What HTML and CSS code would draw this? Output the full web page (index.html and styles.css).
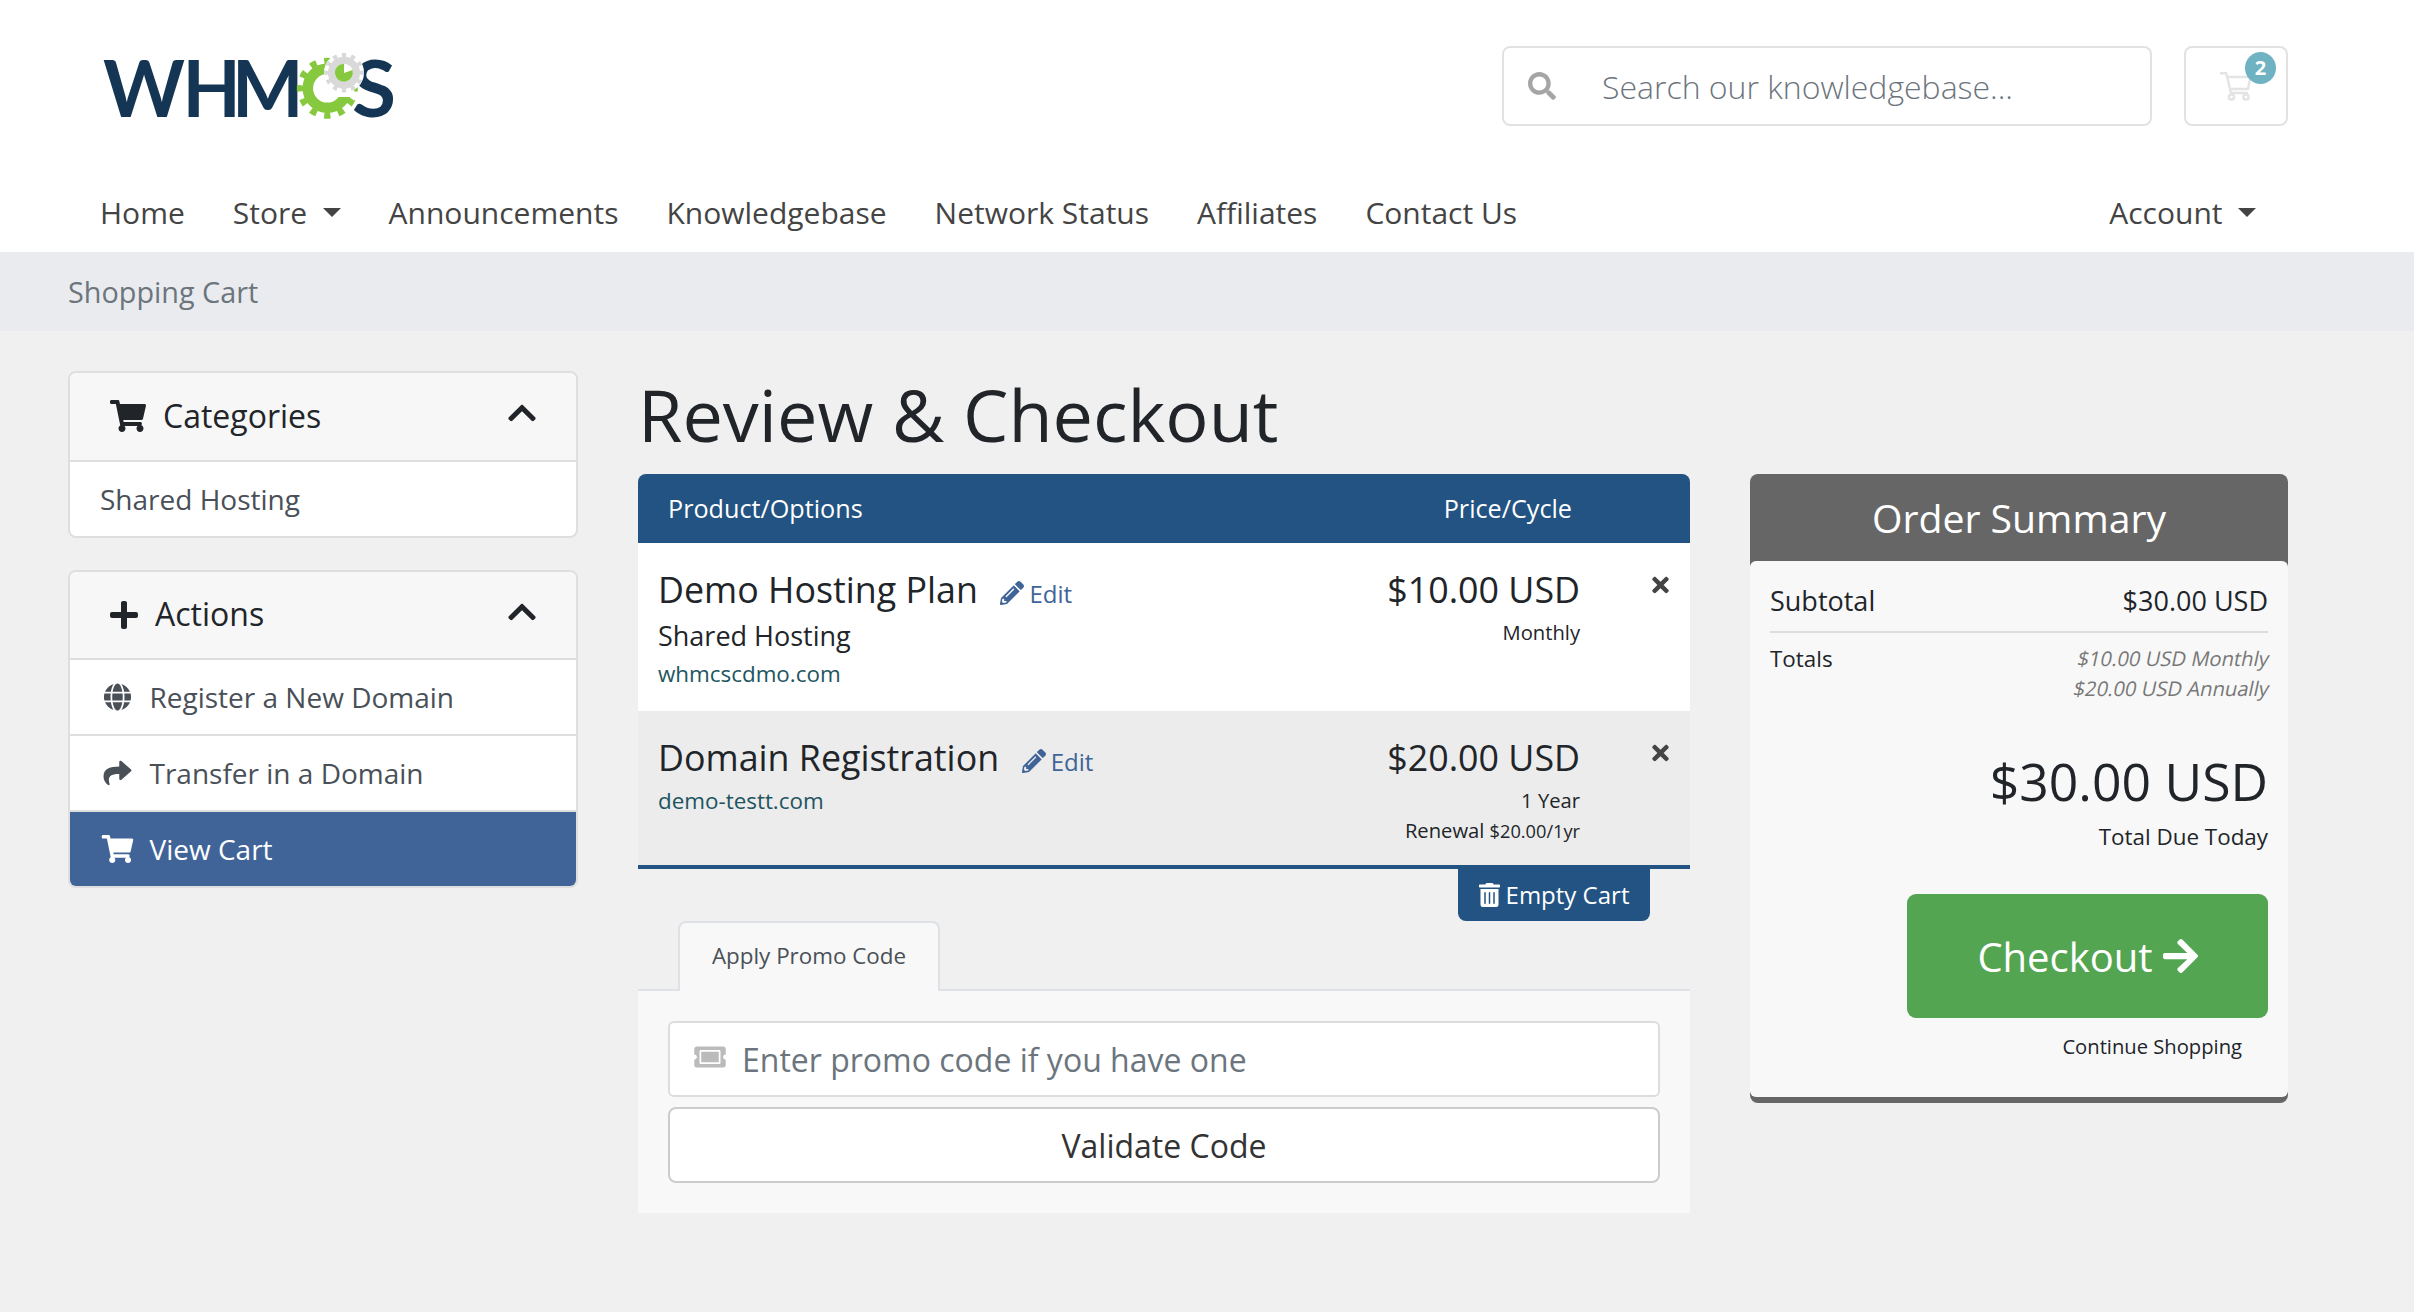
FILE: index.html
```html
<!DOCTYPE html>
<html lang="en">
<head>
    <meta charset="UTF-8">
    <meta name="viewport" content="width=device-width, initial-scale=1.0">
    <title>Shopping Cart - WHMCS</title>
    <link rel="stylesheet" href="styles.css">
</head>
<body>

    <!-- shared icons -->
    <svg class="sprite" width="0" height="0">
        <symbol id="cart" viewBox="0 0 576 512"><path d="M528.12 301.319l47.273-208C578.806 78.301 567.391 64 551.99 64H159.208l-9.166-44.81C147.758 8.021 137.93 0 126.529 0H24C10.745 0 0 10.745 0 24v16c0 13.255 10.745 24 24 24h69.883l70.248 343.435C147.325 417.1 136 435.222 136 456c0 30.928 25.072 56 56 56s56-25.072 56-56c0-15.674-6.447-29.835-16.824-40h209.647C430.447 426.165 424 440.326 424 456c0 30.928 25.072 56 56 56s56-25.072 56-56c0-22.172-12.888-41.332-31.579-50.405l5.517-24.276c3.413-15.018-8.002-29.319-23.403-29.319H218.117l-6.545-32h293.145c11.206 0 20.92-7.754 23.403-18.681z"/></symbol>
        <symbol id="chevron" viewBox="0 0 448 512"><path d="M240.971 130.524l194.343 194.343c9.373 9.373 9.373 24.569 0 33.941l-22.667 22.667c-9.357 9.357-24.522 9.375-33.901.04L224 227.495 69.255 381.516c-9.379 9.335-24.544 9.317-33.901-.04l-22.667-22.667c-9.373-9.373-9.373-24.569 0-33.941L207.03 130.525c9.372-9.373 24.568-9.373 33.941-.001z"/></symbol>
        <symbol id="pencil" viewBox="0 0 512 512"><path d="M497.9 142.1l-46.1 46.1c-4.7 4.7-12.3 4.7-17 0l-111-111c-4.7-4.7-4.7-12.3 0-17l46.1-46.1c18.7-18.7 49.1-18.7 67.9 0l60.1 60.1c18.8 18.7 18.8 49.1 0 67.9zM284.2 99.8L21.6 362.4.4 483.9c-2.9 16.4 11.4 30.6 27.8 27.8l121.5-21.3 262.6-262.6c4.7-4.7 4.7-12.3 0-17l-111-111c-4.8-4.7-12.4-4.7-17.1 0zM124.1 339.9c-5.5-5.5-5.5-14.3 0-19.8l154-154c5.5-5.5 14.3-5.5 19.8 0s5.5 14.3 0 19.8l-154 154c-5.5 5.5-14.3 5.5-19.8 0zM88 424h48v36.3l-64.5 11.3-31.1-31.1L51.7 376H88v48z"/></symbol>
        <symbol id="times" viewBox="0 0 352 512"><path d="M242.72 256l100.07-100.07c12.28-12.28 12.28-32.19 0-44.48l-22.24-22.24c-12.28-12.28-32.19-12.28-44.48 0L176 189.28 75.93 89.21c-12.28-12.28-32.19-12.28-44.48 0L9.21 111.45c-12.28 12.28-12.28 32.19 0 44.48L109.28 256 9.21 356.07c-12.28 12.28-12.28 32.19 0 44.48l22.24 22.24c12.28 12.28 32.2 12.28 44.48 0L176 322.72l100.07 100.07c12.28 12.28 32.2 12.28 44.48 0l22.24-22.24c12.28-12.28 12.28-32.19 0-44.48L242.72 256z"/></symbol>
    </svg>

    <header class="header">
        <div class="container topbar">
            <a href="#" class="logo">
                <svg width="304" height="120" viewBox="100 26 304 120">
                    <g class="logo-text">
                        <text x="103" y="117" textLength="82" lengthAdjust="spacingAndGlyphs">W</text>
                        <text transform="translate(182.5 117) scale(.97 1)" x="0 51">HM</text>
                        <text x="352" y="117" textLength="44" lengthAdjust="spacingAndGlyphs">S</text>
                    </g>
                    <!-- big gear -->
                    <circle class="gear-green" cx="327.3" cy="88.3" r="19.5" stroke-width="10.5"/>
                    <circle class="gear-green" cx="327.3" cy="88.3" r="27" stroke-width="7" pathLength="24" stroke-dasharray="0.9 1.1" stroke-dashoffset="0.45"/>
                    <path class="cut" d="M331 50H354V101L351 97H338L331 88z"/>
                    <!-- small gear -->
                    <circle class="gear-edge" cx="344" cy="72.7" r="15" stroke-width="10"/>
                    <circle class="gear-gray" cx="344" cy="72.7" r="12.5" stroke-width="7"/>
                    <circle class="gear-gray" cx="344" cy="72.7" r="17.3" stroke-width="5" pathLength="24" stroke-dasharray="0.9 1.1" stroke-dashoffset="0.45"/>
                    <path class="dial" d="M344 63.7A9 9 0 1 0 352.5 70L344 73z"/>
                </svg>
            </a>
            <form class="search">
                <svg width="28" height="28" viewBox="0 0 512 512"><path d="M505 442.7L405.3 343c-4.5-4.5-10.6-7-17-7H372c27.6-35.3 44-79.7 44-128C416 93.1 322.9 0 208 0S0 93.1 0 208s93.1 208 208 208c48.3 0 92.7-16.4 128-44v16.3c0 6.4 2.5 12.5 7 17l99.7 99.7c9.4 9.4 24.6 9.4 33.9 0l28.3-28.3c9.4-9.4 9.4-24.6.1-34zM208 336c-70.7 0-128-57.2-128-128 0-70.7 57.2-128 128-128 70.7 0 128 57.2 128 128 0 70.7-57.2 128-128 128z"/></svg>
                <input type="text" placeholder="Search our knowledgebase...">
            </form>
            <a href="#" class="cart-btn">
                <svg width="32" height="30" viewBox="0 0 32 30">
                    <path d="M0 2.3H6.2L11 22H28M7.5 6H30.5L28 18H10.5"/>
                    <circle cx="11.5" cy="26" r="2.6"/>
                    <circle cx="26" cy="26" r="2.6"/>
                </svg>
                <span class="badge">2</span>
            </a>
        </div>
        <nav class="container navbar">
            <a href="#">Home</a>
            <a href="#" class="dropdown">Store</a>
            <a href="#">Announcements</a>
            <a href="#">Knowledgebase</a>
            <a href="#">Network Status</a>
            <a href="#">Affiliates</a>
            <a href="#">Contact Us</a>
            <a href="#" class="dropdown account">Account</a>
        </nav>
    </header>

    <div class="breadcrumb">
        <div class="container">Shopping Cart</div>
    </div>

    <main class="container main">
        <aside class="sidebar">
            <div class="card">
                <div class="card-header">
                    <svg width="36" height="32"><use href="#cart"/></svg>
                    <h3>Categories</h3>
                    <svg class="toggle" width="28" height="32"><use href="#chevron"/></svg>
                </div>
                <a href="#" class="item">Shared Hosting</a>
            </div>
            <div class="card">
                <div class="card-header">
                    <svg width="28" height="32" viewBox="0 0 448 512"><path d="M416 208H272V64c0-17.67-14.33-32-32-32h-32c-17.67 0-32 14.33-32 32v144H32c-17.67 0-32 14.33-32 32v32c0 17.67 14.33 32 32 32h144v144c0 17.67 14.33 32 32 32h32c17.67 0 32-14.33 32-32V304h144c17.67 0 32-14.33 32-32v-32c0-17.67-14.33-32-32-32z"/></svg>
                    <h3>Actions</h3>
                    <svg class="toggle" width="28" height="32"><use href="#chevron"/></svg>
                </div>
                <a href="#" class="item">
                    <svg width="35" height="28" viewBox="-72 0 640 512"><path d="M336.5 160C322 70.7 287.8 8 248 8s-74 62.7-88.5 152h177zM152 256c0 22.2 1.2 43.5 3.3 64h185.3c2.1-20.5 3.3-41.8 3.3-64s-1.2-43.5-3.3-64H155.3c-2.1 20.5-3.3 41.8-3.3 64zm324.7-96c-28.6-67.9-86.5-120.4-158-141.6 24.4 33.8 41.2 84.7 50 141.6h108zM177.2 18.4C105.8 39.6 47.8 92.1 19.3 160h108c8.7-56.9 25.5-107.8 49.9-141.6zM487.4 192H372.7c2.1 21 3.3 42.5 3.3 64s-1.2 43-3.3 64h114.6c5.5-20.5 8.6-41.8 8.6-64s-3.1-43.5-8.5-64zM120 256c0-21.5 1.2-43 3.3-64H8.6C3.2 212.5 0 233.8 0 256s3.2 43.5 8.6 64h114.6c-2-21-3.2-42.5-3.2-64zm39.5 96c14.5 89.3 48.7 152 88.5 152s74-62.7 88.5-152h-177zm159.3 141.6c71.4-21.2 129.4-73.7 158-141.6h-108c-8.8 56.9-25.6 107.8-50 141.6zM19.3 352c28.6 67.9 86.5 120.4 158 141.6-24.4-33.8-41.2-84.7-50-141.6h-108z"/></svg>
                    Register a New Domain
                </a>
                <a href="#" class="item">
                    <svg width="35" height="28" viewBox="-64 0 640 512"><path d="M503.691 189.836L327.687 37.851C312.281 24.546 288 35.347 288 56.015v80.053C127.371 137.907 0 170.1 0 322.326c0 61.441 39.581 122.309 83.333 154.132 13.653 9.931 33.111-2.533 28.077-18.631C66.066 312.814 132.917 274.316 288 272.085V360c0 20.7 24.3 31.453 39.687 18.164l176.004-152c11.071-9.562 11.086-26.753 0-36.328z"/></svg>
                    Transfer in a Domain
                </a>
                <a href="#" class="item active">
                    <svg width="35" height="28"><use href="#cart"/></svg>
                    View Cart
                </a>
            </div>
        </aside>

        <section class="content">
            <h1>Review &amp; Checkout</h1>
            <div class="columns">
                <div class="cart-body">
                    <div class="items-header">
                        <span>Product/Options</span>
                        <span>Price/Cycle</span>
                    </div>
                    <div class="items">
                        <div class="row">
                            <div class="product">
                                <div class="name">Demo Hosting Plan <a href="#" class="edit"><svg width="24" height="24"><use href="#pencil"/></svg>Edit</a></div>
                                <div class="group">Shared Hosting</div>
                                <div class="domain">whmcscdmo.com</div>
                            </div>
                            <div class="price">
                                <div class="amount">$10.00 USD</div>
                                <div class="cycle">Monthly</div>
                            </div>
                            <a href="#" class="remove"><svg width="17" height="24"><use href="#times"/></svg></a>
                        </div>
                        <div class="row odd">
                            <div class="product">
                                <div class="name">Domain Registration <a href="#" class="edit"><svg width="24" height="24"><use href="#pencil"/></svg>Edit</a></div>
                                <div class="domain">demo-testt.com</div>
                            </div>
                            <div class="price">
                                <div class="amount">$20.00 USD</div>
                                <div class="cycle">1 Year<br>Renewal <small>$20.00/1yr</small></div>
                            </div>
                            <a href="#" class="remove"><svg width="17" height="24"><use href="#times"/></svg></a>
                        </div>
                    </div>
                    <button class="empty-cart">
                        <svg width="21" height="24" viewBox="0 0 448 512"><path d="M32 464a48 48 0 0 0 48 48h288a48 48 0 0 0 48-48V128H32zm272-256a16 16 0 0 1 32 0v224a16 16 0 0 1-32 0zm-96 0a16 16 0 0 1 32 0v224a16 16 0 0 1-32 0zm-96 0a16 16 0 0 1 32 0v224a16 16 0 0 1-32 0zM432 32H312l-9.4-18.7A24 24 0 0 0 281.1 0H166.8a23.72 23.72 0 0 0-21.4 13.3L136 32H16A16 16 0 0 0 0 48v32a16 16 0 0 0 16 16h416a16 16 0 0 0 16-16V48a16 16 0 0 0-16-16z"/></svg>
                        Empty Cart
                    </button>
                    <div class="tabs"><a href="#">Apply Promo Code</a></div>
                    <div class="promo">
                        <div class="promo-input">
                            <svg width="32" height="28" viewBox="0 0 576 512"><path d="M128 160h320v192H128V160zm400 96c0 26.51 21.49 48 48 48v96c0 26.51-21.49 48-48 48H48c-26.51 0-48-21.49-48-48v-96c26.51 0 48-21.49 48-48s-21.49-48-48-48v-96c0-26.51 21.49-48 48-48h480c26.51 0 48 21.49 48 48v96c-26.51 0-48 21.49-48 48zm-48-104c0-13.255-10.745-24-24-24H120c-13.255 0-24 10.745-24 24v208c0 13.255 10.745 24 24 24h336c13.255 0 24-10.745 24-24V152z"/></svg>
                            <input type="text" placeholder="Enter promo code if you have one">
                        </div>
                        <button class="validate">Validate Code</button>
                    </div>
                </div>

                <div class="summary">
                    <h2>Order Summary</h2>
                    <div class="summary-body">
                        <div class="subtotal"><span>Subtotal</span><span>$30.00 USD</span></div>
                        <div class="recurring">
                            <span>Totals</span>
                            <div class="cycles">
                                <div>$10.00 USD Monthly</div>
                                <div>$20.00 USD Annually</div>
                            </div>
                        </div>
                        <div class="total-due">$30.00 USD</div>
                        <div class="total-label">Total Due Today</div>
                        <button class="checkout">
                            Checkout
                            <svg width="35" height="40" viewBox="0 0 448 512"><path d="M190.5 66.9l22.2-22.2c9.4-9.4 24.6-9.4 33.9 0L441 239c9.4 9.4 9.4 24.6 0 33.9L246.6 467.3c-9.4 9.4-24.6 9.4-33.9 0l-22.2-22.2c-9.5-9.5-9.3-25 .4-34.3L311.4 296H24c-13.3 0-24-10.7-24-24v-32c0-13.3 10.7-24 24-24h287.4L190.9 101.2c-9.8-9.3-10-24.8-.4-34.3z"/></svg>
                        </button>
                        <a href="#" class="continue">Continue Shopping</a>
                    </div>
                </div>
            </div>
        </section>
    </main>

</body>
</html>
```

FILE: styles.css
```css
* { box-sizing: border-box; }

body {
    margin: 0;
    background: #f0f0f0;
    font-family: "Open Sans", "Noto Sans", sans-serif;
    font-size: 26px;
    color: #212529;
}

a { color: inherit; text-decoration: none; }
h1, h2, h3 { margin: 0; font-weight: 400; }
svg { fill: currentColor; flex-shrink: 0; }
input, button { font-family: inherit; margin: 0; }
.sprite { position: absolute; }

.container {
    width: 2220px;
    margin-left: 68px;
}

/* HEADER */
.header { background: #fff; }

.topbar {
    display: flex;
    align-items: center;
    height: 172px;
    padding-left: 32px;
}

.logo { margin-right: auto; }
.logo svg { display: block; }
.logo-text {
    font-family: Lato, sans-serif;
    font-weight: 700;
    font-size: 78px;
    fill: #143553;
}
.gear-green { fill: none; stroke: #87c93e; }
.gear-gray { fill: none; stroke: #d9d9d9; }
.gear-edge { fill: #fff; stroke: #fff; }
.cut { fill: #fff; }
.dial { fill: #87c93e; }

.search {
    display: flex;
    align-items: center;
    width: 650px;
    height: 80px;
    margin-right: 32px;
    padding-left: 24px;
    border: 2px solid #e2e2e2;
    border-radius: 8px;
    color: #a5a5a5;
}
.search input {
    flex: 1;
    height: 76px;
    margin-left: 22px;
    padding: 0 24px;
    border: 0;
    background: none;
    font-size: 32px;
    font-weight: 300;
}
input::placeholder { color: #6c757d; opacity: 1; }

.cart-btn {
    position: relative;
    display: flex;
    align-items: center;
    justify-content: center;
    width: 104px;
    height: 80px;
    border: 2px solid #e2e2e2;
    border-radius: 8px;
}
.cart-btn svg {
    fill: none;
    stroke: #e4e4e4;
    stroke-width: 2.5;
}
.badge {
    position: absolute;
    top: 4px;
    right: 10px;
    width: 31px;
    height: 32px;
    border-radius: 50%;
    background: #6fb3c3;
    color: #fff;
    font-size: 20px;
    font-weight: 700;
    line-height: 31px;
    text-align: center;
}

.navbar {
    display: flex;
    align-items: center;
    gap: 48px;
    height: 80px;
    padding: 0 32px;
    font-size: 30px;
    color: #444;
}
.dropdown { display: flex; align-items: center; }
.dropdown::after {
    content: "";
    margin-left: 15.5px;
    border: 9px solid transparent;
    border-top-color: #444;
    border-bottom: 0;
}
.account { margin-left: auto; }

.breadcrumb {
    background: #e9ebee;
    font-size: 28.8px;
    line-height: 79px;
    color: #6c757d;
}

/* SIDEBAR */
.main {
    display: flex;
    align-items: flex-start;
    gap: 60px;
    padding: 40px 0;
}
.sidebar {
    display: flex;
    flex-direction: column;
    gap: 32px;
    width: 510px;
}
.card {
    border: 2px solid #dedede;
    border-radius: 8px;
    background: #fff;
    overflow: hidden;
}
.card-header {
    display: flex;
    align-items: center;
    gap: 17px;
    height: 86.5px;
    padding: 0 40px;
    background: #f7f7f7;
}
.card-header h3 { font-size: 32px; line-height: 42px; margin-bottom: 1px; }
.toggle { margin: 0 0 6px auto; }
.item {
    display: flex;
    align-items: center;
    gap: 14.5px;
    height: 76px;
    padding: 0 30px;
    border-top: 2px solid #dedede;
    font-size: 28px;
    color: #495057;
}
.active { background: #406498; background-clip: padding-box; color: #fff; }

/* CART */
.content { flex: 1; }
h1 {
    height: 103px;
    font-size: 72px;
    line-height: 86px;
}
.columns {
    display: flex;
    align-items: flex-start;
    gap: 60px;
}
.cart-body { width: 1052px; }
.items-header {
    display: flex;
    justify-content: space-between;
    height: 69px;
    padding: 0 118px 0 30px;
    border-radius: 8px 8px 0 0;
    background: #235382;
    color: #fff;
    font-size: 25.2px;
    line-height: 69px;
}
.items { border-bottom: 4px solid #235382; }
.row {
    display: flex;
    height: 168px;
    padding: 20px 21px 0 20px;
    background: #fff;
}
.odd { height: 154px; background: #ececec; }
.product { flex: 1; }
.name {
    display: flex;
    font-size: 35.8px;
    line-height: 52px;
}
.edit {
    display: flex;
    align-items: center;
    gap: 5px;
    margin-left: 22.5px;
    padding-top: 8px;
    font-size: 24px;
    line-height: 43px;
    color: #406498;
}
.group { font-size: 27px; line-height: 41px; }
.domain { font-size: 22.4px; line-height: 36px; color: #1e5560; }
.price { text-align: right; }
.amount { font-size: 35.8px; line-height: 52px; }
.cycle { margin-top: 2px; font-size: 20.2px; line-height: 30px; }
.cycle small { font-size: 18.2px; }
.remove { margin: 10px 0 0 72px; color: #444; }
.remove svg { display: block; }

.empty-cart {
    display: flex;
    align-items: center;
    justify-content: center;
    gap: 6px;
    width: 192px;
    height: 52px;
    margin: 0 40px 0 auto;
    padding: 0 0 1px;
    border: 0;
    border-radius: 0 0 8px 8px;
    background: #235382;
    color: #fff;
    font-size: 24px;
}

.tabs {
    height: 70px;
    padding-left: 40px;
    border-bottom: 2px solid #dee2e6;
}
.tabs a {
    display: block;
    width: 262px;
    height: 70px;
    border: 2px solid #dee2e6;
    border-bottom: 0;
    border-radius: 8px 8px 0 0;
    background: #f8f8f8;
    font-size: 22.4px;
    line-height: 65px;
    text-align: center;
    color: #495057;
}
.promo { padding: 30px; background: #f8f8f8; }
.promo-input {
    display: flex;
    align-items: center;
    height: 76px;
    margin-bottom: 10px;
    padding-left: 24px;
    border: 2px solid #ddd;
    border-radius: 6px;
    background: #fff;
}
.promo-input svg { color: #bbb; margin-bottom: 4px; }
.promo-input input {
    flex: 1;
    height: 72px;
    padding: 0 16px;
    border: 0;
    background: none;
    font-size: 32px;
}
.validate {
    width: 100%;
    height: 76px;
    border: 2px solid #ccc;
    border-radius: 8px;
    background: #fff;
    font-size: 32px;
    color: #333;
}

/* ORDER SUMMARY */
.summary {
    width: 538px;
    padding-bottom: 6px;
    border-radius: 8px;
    background: #666;
}
.summary h2 {
    height: 87px;
    font-size: 39.2px;
    line-height: 87px;
    text-align: center;
    color: #fff;
}
.summary-body {
    display: flex;
    flex-direction: column;
    align-items: flex-end;
    height: 536px;
    padding: 20px;
    border-radius: 6px;
    background: #f8f8f8;
}
.subtotal, .recurring {
    display: flex;
    justify-content: space-between;
    width: 100%;
}
.subtotal {
    height: 52px;
    border-bottom: 2px solid #ddd;
    font-size: 27px;
    line-height: 40px;
}
.recurring { padding-top: 10px; font-size: 22.4px; line-height: 32px; }
.cycles {
    margin-right: -1px;
    font-size: 20.2px;
    line-height: 30px;
    text-align: right;
    color: #777;
}
/* slanted by hand, the italic face is too narrow */
.cycles div { transform: skewX(-12deg); }
.total-due { margin-top: 39px; font-size: 51.7px; line-height: 78px; }
.total-label { font-size: 22.4px; line-height: 34px; }
.checkout {
    display: flex;
    align-items: center;
    justify-content: center;
    gap: 10px;
    width: 361px;
    height: 124px;
    margin-top: 40px;
    border: 0;
    border-radius: 9px;
    background: #54a551;
    color: #fff;
    font-size: 40px;
}
.continue { margin: 13px 26px 0 0; font-size: 20.2px; line-height: 30px; }
```
